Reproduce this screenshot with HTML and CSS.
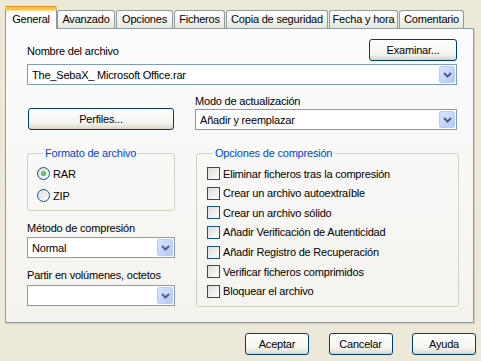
FILE: index.html
```html
<!DOCTYPE html>
<html lang="es">
<head>
  <meta charset="UTF-8">
  <title>Nombre y parámetros del archivo</title>
  <link rel="stylesheet" href="styles.css">
</head>
<body>

<div class="dialog">
  <div class="tabs">
    <div class="tab active tab-general">General</div>
    <div class="tab tab-advanced">Avanzado</div>
    <div class="tab tab-options">Opciones</div>
    <div class="tab tab-files">Ficheros</div>
    <div class="tab tab-backup">Copia de seguridad</div>
    <div class="tab tab-time">Fecha y hora</div>
    <div class="tab tab-comment">Comentario</div>
  </div>

  <div class="panel">
    <div class="file-head">
      <div class="lbl">Nombre del archivo</div>
      <button class="btn btn-browse">Examinar...</button>
    </div>
    <div class="combo combo-file">
      <span class="combo-text">The_SebaX_ Microsoft Office.rar</span>
      <span class="combo-arrow"><svg width="9" height="6" viewBox="0 0 9 6"><polyline points="1,1 4.5,4.5 8,1" fill="none" stroke="#4d6185" stroke-width="2"/></svg></span>
    </div>

    <div class="grid">
      <div></div>
      <div class="lbl lbl-mode">Modo de actualización</div>

      <button class="btn btn-profiles">Perfiles...</button>
      <div class="combo combo-mode">
        <span class="combo-text">Añadir y reemplazar</span>
        <span class="combo-arrow"><svg width="9" height="6" viewBox="0 0 9 6"><polyline points="1,1 4.5,4.5 8,1" fill="none" stroke="#4d6185" stroke-width="2"/></svg></span>
      </div>

      <div class="left-col">
        <fieldset class="group group-format">
          <legend>Formato de archivo</legend>
          <div class="opt opt-first"><span class="radio on"></span>RAR</div>
          <div class="opt opt-second"><span class="radio"></span>ZIP</div>
        </fieldset>

        <div class="lbl lbl-method">Método de compresión</div>
        <div class="combo combo-small">
          <span class="combo-text">Normal</span>
          <span class="combo-arrow"><svg width="9" height="6" viewBox="0 0 9 6"><polyline points="1,1 4.5,4.5 8,1" fill="none" stroke="#4d6185" stroke-width="2"/></svg></span>
        </div>

        <div class="lbl lbl-split">Partir en volúmenes, octetos</div>
        <div class="combo combo-small combo-split">
          <span class="combo-text"></span>
          <span class="combo-arrow"><svg width="9" height="6" viewBox="0 0 9 6"><polyline points="1,1 4.5,4.5 8,1" fill="none" stroke="#4d6185" stroke-width="2"/></svg></span>
        </div>
      </div>

      <fieldset class="group group-options">
        <legend>Opciones de compresión</legend>
        <div class="checks">
          <div class="chk"><span class="box"></span>Eliminar ficheros tras la compresión</div>
          <div class="chk"><span class="box"></span>Crear un archivo autoextraíble</div>
          <div class="chk"><span class="box"></span>Crear un archivo sólido</div>
          <div class="chk"><span class="box"></span>Añadir Verificación de Autenticidad</div>
          <div class="chk"><span class="box"></span>Añadir Registro de Recuperación</div>
          <div class="chk"><span class="box"></span>Verificar ficheros comprimidos</div>
          <div class="chk"><span class="box"></span>Bloquear el archivo</div>
        </div>
      </fieldset>
    </div>
  </div>

  <div class="actions">
    <button class="btn btn-action">Aceptar</button>
    <button class="btn btn-action">Cancelar</button>
    <button class="btn btn-action">Ayuda</button>
  </div>
</div>

</body>
</html>
```

FILE: styles.css
```css
* {
  box-sizing: border-box;
}

body {
  margin: 0;
  background: #ece9d8;
  font-family: "Liberation Sans", Arial, sans-serif;
  font-size: 11px;
  letter-spacing: -0.2px;
  color: #000;
}

.dialog {
  width: 481px;
  height: 361px;
  padding: 7px 5px 0 5px;
}

/* Tabs */
.tabs {
  display: flex;
  align-items: flex-end;
  height: 21px;
  gap: 1px;
}

.tab {
  height: 18px;
  padding: 0;
  line-height: 17px;
  text-align: center;
  border: 1px solid #919b9c;
  border-bottom: none;
  border-radius: 3px 3px 0 0;
  background: linear-gradient(#ffffff, #f3f3ef 60%, #e6e5dd);
  white-space: nowrap;
}

.tab.active {
  position: relative;
  z-index: 1;
  height: 22px;
  margin-bottom: -1px;
  margin-right: -1px;
  line-height: 18px;
  background: #fcfcfe;
  border-top: 3px solid #ffc83c;
  box-shadow: inset 0 1px 0 #fcdc8f;
}

.tab.active::before {
  content: "";
  position: absolute;
  left: -1px;
  right: -1px;
  top: -4px;
  height: 1px;
  background: #e68b2c;
  border-radius: 3px 3px 0 0;
}

.tab-general { width: 52px; }
.tab-advanced { width: 58px; }
.tab-options { width: 57px; }
.tab-files { width: 51px; }
.tab-backup { width: 102px; }
.tab-time { width: 69px; }
.tab-comment { width: 65px; }

/* Panel */
.panel {
  height: 295px;
  margin-right: 2px;
  padding: 10px 16px 0 21px;
  border: 1px solid #919b9c;
  background: linear-gradient(#fcfcfe, #f4f3ee);
  box-shadow: 1px 1px 0 #d0cebf;
}

.lbl {
  height: 13px;
  line-height: 13px;
  white-space: nowrap;
}

.file-head {
  display: flex;
  justify-content: space-between;
  align-items: flex-end;
}

.file-head .lbl {
  margin-bottom: 3px;
}

/* Buttons */
.btn {
  height: 22px;
  padding: 0;
  border: 1px solid #003c74;
  border-radius: 3px;
  background: linear-gradient(#ffffff, #f4f4f0 70%, #e3e1d7 90%, #d6d0c5);
  font-family: inherit;
  font-size: 11px;
  letter-spacing: inherit;
  color: #000;
}

.btn-browse {
  width: 88px;
}

.btn-profiles {
  width: 146px;
  margin-left: 1px;
}

.btn-action {
  width: 64px;
}

/* Combos */
.combo {
  display: flex;
  align-items: center;
  height: 21px;
  padding: 1px;
  border: 1px solid #7f9db9;
  background: #fff;
}

.combo-text {
  flex: 1;
  padding-left: 3px;
  white-space: nowrap;
}

.combo-arrow {
  display: flex;
  align-items: center;
  justify-content: center;
  width: 16px;
  height: 17px;
  border: 1px solid #b9cdf6;
  border-radius: 2px;
  background: linear-gradient(135deg, #dbe6fe, #c1d3fb 60%, #b3c8f6);
}

.combo-file {
  margin-top: 3px;
}

/* Lower area */
.grid {
  display: grid;
  grid-template-columns: 148px 262px;
  column-gap: 20px;
}

.lbl-mode {
  margin-top: 10px;
}

.combo-mode {
  margin-top: 1px;
}

.left-col {
  display: flex;
  flex-direction: column;
  margin-top: 17px;
}

.group {
  margin: 0;
  padding: 0 0 8px 9px;
  border: 1px solid #d0d0bf;
  border-radius: 3px;
}

.group legend {
  height: 13px;
  margin-left: 6px;
  padding: 0 2px;
  line-height: 13px;
  color: #0046d5;
}

.opt {
  display: flex;
  align-items: center;
  height: 13px;
  gap: 3px;
}

.opt-first {
  margin-top: 7px;
}

.opt-second {
  margin-top: 9px;
}

.radio {
  position: relative;
  width: 13px;
  height: 13px;
  border: 1px solid #1c5180;
  border-radius: 50%;
  background: linear-gradient(135deg, #dcdcd7, #ffffff);
}

.radio.on::after {
  content: "";
  position: absolute;
  left: 3px;
  top: 3px;
  width: 5px;
  height: 5px;
  border-radius: 50%;
  background: radial-gradient(circle at 40% 40%, #7fd77f, #21a121);
}

.lbl-method {
  margin-top: 11px;
}

.combo-small {
  margin-top: 2px;
}

.lbl-split {
  margin-top: 11px;
}

.combo-split {
  margin-top: 3px;
}

.group-options {
  margin: 17px -2px 0 1px;
  padding-left: 10px;
}

.checks {
  display: flex;
  flex-direction: column;
  gap: 6.67px;
  margin-top: 7px;
}

.chk {
  display: flex;
  align-items: center;
  height: 13px;
  gap: 3px;
  white-space: nowrap;
}

.box {
  width: 13px;
  height: 13px;
  border: 1px solid #1c5180;
  background: linear-gradient(135deg, #dcdcd7, #ffffff);
}

/* Bottom buttons */
.actions {
  display: flex;
  justify-content: flex-end;
  gap: 19.5px;
  margin-top: 10px;
}
```
